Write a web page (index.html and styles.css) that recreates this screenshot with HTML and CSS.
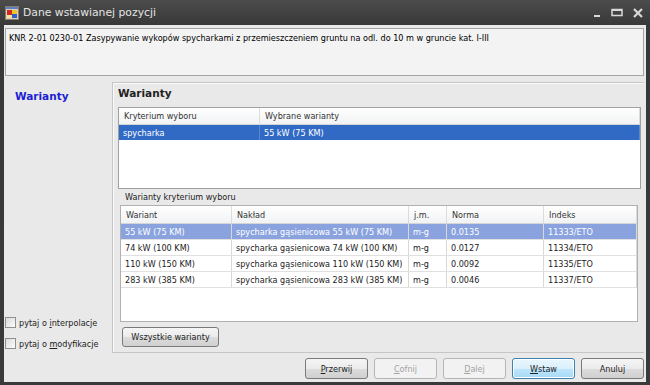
FILE: index.html
```html
<!DOCTYPE html>
<html lang="pl">
<head>
  <meta charset="UTF-8">
  <title>Dane wstawianej pozycji</title>
  <link rel="stylesheet" href="styles.css">
</head>
<body>
  <div class="window">
    <div class="titlebar">
      <svg class="app-icon" width="14" height="14" viewBox="0 0 14 14">
        <rect x="0.5" y="0.5" width="13" height="13" fill="#d8cfc0" stroke="#8a7d6a"/>
        <rect x="1" y="1" width="12" height="2" fill="#5a7fc0"/>
        <rect x="2" y="4" width="5" height="5" fill="#d02a1c"/>
        <rect x="7" y="4" width="5" height="4" fill="#f2c22a"/>
        <rect x="7" y="8" width="5" height="4" fill="#2f5fc8"/>
        <rect x="2" y="9" width="5" height="3" fill="#f4e39a"/>
      </svg>
      <span class="title">Dane wstawianej pozycji</span>
      <div class="controls">
        <svg width="10" height="10" viewBox="0 0 10 10"><rect x="2" y="7" width="6" height="2" fill="#d8d8d8"/></svg>
        <svg width="12" height="10" viewBox="0 0 12 10"><rect x="1" y="1.5" width="10" height="6" fill="none" stroke="#d8d8d8" stroke-width="1.5"/><rect x="1" y="1" width="10" height="2" fill="#d8d8d8"/></svg>
        <svg width="12" height="10" viewBox="0 0 12 10"><path d="M2 1 L10 9 M10 1 L2 9" stroke="#d8d8d8" stroke-width="2.2"/></svg>
      </div>
    </div>

    <div class="client">
      <div class="desc">KNR 2-01 0230-01 Zasypywanie wykopów spycharkami z przemieszczeniem gruntu na odl. do 10 m w gruncie kat. I-III</div>

      <div class="main">
        <aside class="side">
          <div class="side-title">Warianty</div>
          <div class="options">
            <label class="check"><span class="box"></span><span>pytaj o <u>i</u>nterpolacje</span></label>
            <label class="check"><span class="box"></span><span>pytaj o <u>m</u>odyfikacje</span></label>
          </div>
        </aside>

        <section class="group">
          <h2>Warianty</h2>
          <div class="list top-list">
            <table>
              <thead>
                <tr>
                  <th class="c-krit">Kryterium wyboru</th>
                  <th>Wybrane warianty</th>
                </tr>
              </thead>
              <tbody>
                <tr class="selected">
                  <td>spycharka</td>
                  <td>55 kW (75 KM)</td>
                </tr>
              </tbody>
            </table>
          </div>

          <div class="sub">
            <div class="caption">Warianty kryterium wyboru</div>
            <div class="list bottom-list">
              <table class="grid">
                <thead>
                  <tr>
                    <th class="c-war">Wariant</th>
                    <th class="c-nak">Nakład</th>
                    <th class="c-jm">j.m.</th>
                    <th class="c-norma">Norma</th>
                    <th>Indeks</th>
                  </tr>
                </thead>
                <tbody>
                  <tr class="selected dim">
                    <td>55 kW (75 KM)</td>
                    <td>spycharka gąsienicowa 55 kW (75 KM)</td>
                    <td>m-g</td>
                    <td>0.0135</td>
                    <td>11333/ETO</td>
                  </tr>
                  <tr>
                    <td>74 kW (100 KM)</td>
                    <td>spycharka gąsienicowa 74 kW (100 KM)</td>
                    <td>m-g</td>
                    <td>0.0127</td>
                    <td>11334/ETO</td>
                  </tr>
                  <tr>
                    <td>110 kW (150 KM)</td>
                    <td>spycharka gąsienicowa 110 kW (150 KM)</td>
                    <td>m-g</td>
                    <td>0.0092</td>
                    <td>11335/ETO</td>
                  </tr>
                  <tr>
                    <td>283 kW (385 KM)</td>
                    <td>spycharka gąsienicowa 283 kW (385 KM)</td>
                    <td>m-g</td>
                    <td>0.0046</td>
                    <td>11337/ETO</td>
                  </tr>
                </tbody>
              </table>
            </div>
            <button class="btn btn-all">Wszystkie warianty</button>
          </div>
        </section>
      </div>

      <div class="footer">
        <button class="btn"><u>P</u>rzerwij</button>
        <button class="btn" disabled><u>C</u>ofnij</button>
        <button class="btn" disabled><u>D</u>alej</button>
        <button class="btn default"><u>W</u>staw</button>
        <button class="btn">Anuluj</button>
      </div>
    </div>
  </div>
</body>
</html>
```

FILE: styles.css
```css
body {
  margin: 0;
  padding: 0;
  background-color: #3a3a3a;
  font-family: "DejaVu Sans", sans-serif;
  font-stretch: condensed;
  font-size: 9px;
  color: #000;
}

.window {
  width: 650px;
  height: 385px;
  display: flex;
  flex-direction: column;
  background: linear-gradient(#4c4c4c, #383838 25px, #3a3a3a);
}

.titlebar {
  height: 25px;
  display: flex;
  align-items: center;
  padding: 0 6px 0 5px;
  box-sizing: border-box;
}

.app-icon {
  margin-right: 4px;
}

.title {
  color: #e4e4e4;
  font-family: "DejaVu Sans", sans-serif;
  font-stretch: normal;
  font-size: 10.8px;
}

.controls {
  margin-left: auto;
  display: flex;
  gap: 9px;
  align-items: center;
}

.client {
  flex: 1;
  margin: 0 4px 3px 4px;
  background-color: #e9e9e9;
  display: flex;
  flex-direction: column;
  padding: 3px 2px 0 1px;
}

.desc {
  height: 48px;
  background-color: #f3f3f3;
  border: 1px solid #a5a5a5;
  padding: 4px 3px;
  box-sizing: border-box;
}

.main {
  display: flex;
  height: 277px;
}

.side {
  width: 107px;
  display: flex;
  flex-direction: column;
  justify-content: space-between;
}

.side-title {
  margin: 14px 0 0 10px;
  color: #1d1dd6;
  font-weight: bold;
  font-size: 10.5px;
  font-stretch: normal;
}

.options {
  display: flex;
  flex-direction: column;
  gap: 10px;
  margin-bottom: 4px;
}

.check {
  display: flex;
  align-items: center;
  gap: 3px;
  color: #222;
}

.box {
  width: 9px;
  height: 9px;
  border: 1px solid #8e8f8f;
  background: linear-gradient(135deg, #dcdcdc, #fbfbfb);
}

.group {
  flex: 1;
  margin-top: 6px;
  border: 1px solid #c6c6c6;
  border-right: none;
  box-shadow: inset 1px 1px 0 #fafafa;
  padding: 0 0 0 5px;
  display: flex;
  flex-direction: column;
}

.group h2 {
  margin: 4px 0 0 0;
  font-size: 10.5px;
  font-stretch: normal;
  height: 20px;
  color: #222;
}

.list {
  background-color: #fff;
  border: 1px solid #a0a0a0;
  box-sizing: border-box;
}

.top-list {
  height: 82px;
  width: 523px;
}

table {
  width: 100%;
  border-collapse: collapse;
  table-layout: fixed;
}

th {
  height: 16px;
  padding: 0 5px;
  text-align: left;
  font-weight: normal;
  color: #333;
  background: linear-gradient(#ffffff, #f1f2f4);
  border-right: 1px solid #dcdcdc;
  border-bottom: 1px solid #d5d5d5;
}

td {
  height: 15px;
  padding: 0 4px;
  white-space: nowrap;
  overflow: hidden;
}

.c-krit {
  width: 130px;
}

.top-list td {
  border-right: 1px solid #5b87cf;
}

.selected td {
  background-color: #316ac5;
  color: #fff;
}

.selected.dim td {
  background-color: #8aa3df;
}

.sub {
  padding: 3px 3px 0 2px;
  display: flex;
  flex-direction: column;
}

.caption {
  height: 13px;
  padding-left: 5px;
  color: #222;
}

.bottom-list {
  height: 117px;
  width: 518px;
  border-color: #b0b0b0;
}

.grid th {
  height: 17px;
}

.c-war {
  width: 100px;
}

.c-nak {
  width: 166px;
}

.c-jm {
  width: 27px;
}

.c-norma {
  width: 86px;
}

.grid td {
  border-right: 1px solid #d8d8d8;
  border-bottom: 1px solid #e0e0e0;
  color: #222;
}

.grid .selected td {
  color: #fff;
}

.btn {
  font-family: inherit;
  font-stretch: inherit;
  font-size: 9px;
  height: 21px;
  width: 63px;
  border: 1px solid #7a7a7a;
  border-radius: 3px;
  background: linear-gradient(#f5f5f5, #ebebeb 50%, #dcdcdc 51%, #d0d0d0);
  color: #222;
  padding: 0;
}

.btn-all {
  margin: 5px 0 0 2px;
  width: 97px;
  height: 20px;
}

.btn:disabled {
  border-color: #b5b5b5;
  background: #f2f2f2;
  color: #a3a3a3;
}

.btn.default {
  border-color: #3c7fb1;
  background: linear-gradient(#eaf6fd, #d9f0fc 50%, #bee6fd 51%, #a7d9f5);
  box-shadow: inset 0 0 0 1px #fff;
}

.footer {
  display: flex;
  justify-content: flex-end;
  gap: 6px;
  padding: 5px 0 0 0;
}
```
